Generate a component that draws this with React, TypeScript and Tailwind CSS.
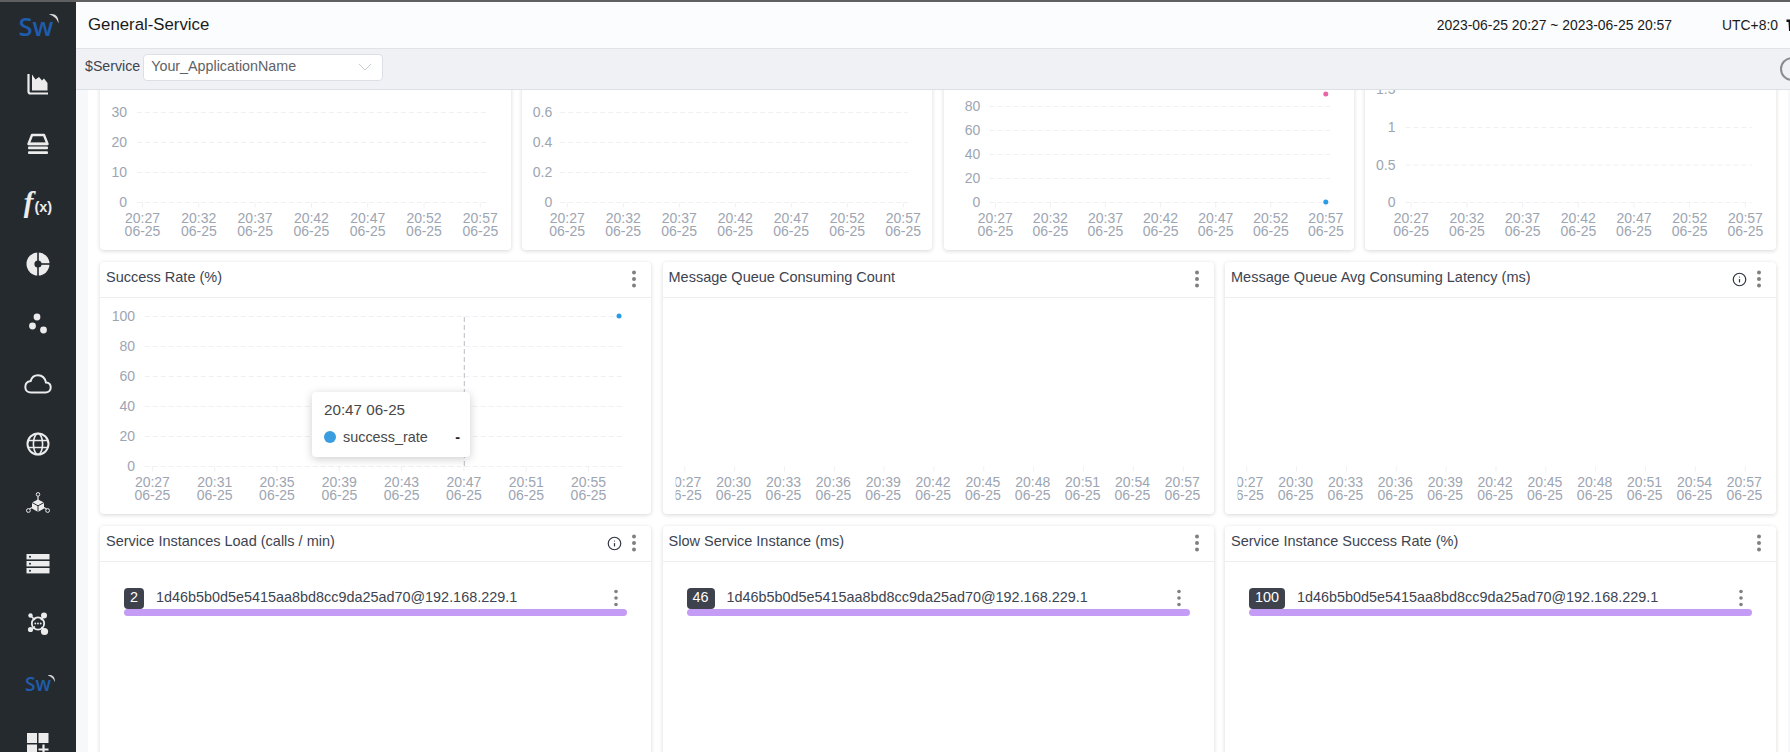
import React from "react";
import { Info } from "lucide-react";

const AXIS = "#9da5b2";
const GRID = "#eef0f3";

type YT = { l: string; y: number };
type ChartProps = {
  ox: number; oy: number; w: number; h: number;
  x0?: number; x1?: number; yLabelX?: number; axisY: number;
  yTicks?: YT[]; xs: { x: number; l: string; tx?: number }[];
  clipX?: number; children?: React.ReactNode; id: string;
};

function Chart({ ox, oy, w, h, x0, x1, yLabelX, axisY, yTicks = [], xs, clipX, children, id }: ChartProps) {
  return (
    <svg width={w} height={h} viewBox={`${ox} ${oy} ${w} ${h}`} className="block">
      {clipX !== undefined && (
        <clipPath id={id}>
          <rect x={clipX} y={oy} width={w} height={h} />
        </clipPath>
      )}
      {yTicks.map((t) => (
        <g key={t.l}>
          <line x1={x0} x2={x1} y1={t.y} y2={t.y} stroke={GRID} strokeDasharray="5 3" />
          <text x={yLabelX} y={t.y + 4.5} textAnchor="end" fill={AXIS} className="text-[14px]">{t.l}</text>
        </g>
      ))}
      {xs.map((t) => (
        <g key={t.x} clipPath={clipX !== undefined ? `url(#${id})` : undefined}>
          <line x1={t.tx ?? t.x} x2={t.tx ?? t.x} y1={axisY} y2={axisY + 5} stroke={GRID} />
          <text x={t.x} y={axisY + 20.5} textAnchor="middle" fill={AXIS} className="text-[14px]">{t.l}</text>
          <text x={t.x} y={axisY + 33.5} textAnchor="middle" fill={AXIS} className="text-[14px]">06-25</text>
        </g>
      ))}
      {children}
    </svg>
  );
}

function Kebab({ small }: { small?: boolean }) {
  return (
    <svg width="6" height="18" viewBox="0 0 6 18" className="block shrink-0">
      <circle cx="3" cy="2.5" r={small ? 1.8 : 2} fill="#808080" />
      <circle cx="3" cy="9" r={small ? 1.8 : 2} fill="#808080" />
      <circle cx="3" cy="15.5" r={small ? 1.8 : 2} fill="#808080" />
    </svg>
  );
}

function Card({ title, info, children, className = "" }: { title: string; info?: boolean; children?: React.ReactNode; className?: string }) {
  return (
    <div className={`bg-white rounded-[4px] shadow-[0_1px_4px_rgba(0,0,0,0.16)] flex flex-col min-w-0 ${className}`}>
      <div className="h-[36px] shrink-0 border-b border-[#eeeeee] flex items-center pl-[6px] pr-[14px] text-[14.5px] text-[#3d4451]">
        <span className="truncate pb-[3px]">{title}</span>
        <span className="ml-auto flex items-center gap-[9px] pb-[1px]">
          {info && <Info size={15} strokeWidth={1.9} color="#2d3340" />}
          <Kebab />
        </span>
      </div>
      {children}
    </div>
  );
}

const topTimes = ["20:27", "20:32", "20:37", "20:42", "20:47", "20:52", "20:57"];
const xsFrom = (start: number, step: number, times: string[]) => times.map((l, i) => ({ x: start + step * i, l }));

function TopCard({ ox, x0, x1, yLabelX, yTicks, start, step, id, children }: { ox: number; x0: number; x1: number; yLabelX: number; yTicks: YT[]; start: number; step: number; id: string; children?: React.ReactNode }) {
  return (
    <Card title="">
      <Chart id={id} ox={ox} oy={33} w={410.5} h={216} x0={x0} x1={x1} yLabelX={yLabelX} axisY={201.5} yTicks={yTicks} xs={xsFrom(start, step, topTimes)}>
        {children}
      </Chart>
    </Card>
  );
}

const midTimes = ["20:27", "20:30", "20:33", "20:36", "20:39", "20:42", "20:45", "20:48", "20:51", "20:54", "20:57"];

function EmptyChartCard({ title, ox, id, info }: { title: string; ox: number; id: string; info?: boolean }) {
  const xs = midTimes.map((l, i) => ({ x: ox + 20.8 + 49.85 * i, tx: ox + 21.7 + 49.85 * i, l }));
  return (
    <Card title={title} info={info}>
      <Chart id={id} ox={ox} oy={297} w={551} h={216} axisY={465.5} xs={xs} clipX={ox + 12.6} />
    </Card>
  );
}

function InstanceCard({ title, value, info }: { title: string; value: string; info?: boolean }) {
  return (
    <Card title={title} info={info} className="h-[320px]">
      <div className="px-[24px] pt-[25px]">
        <div className="flex items-center h-[22px] text-[14.4px] text-[#3d4451]">
          <span className="bg-[#3d424d] text-white rounded-[4px] h-[21px] px-[6px] flex items-center justify-center">{value}</span>
          <span className="ml-[12px] pb-[1px]">1d46b5b0d5e5415aa8bd8cc9da25ad70@192.168.229.1</span>
          <span className="ml-auto pr-[8px]"><Kebab small /></span>
        </div>
        <div className="h-[7px] rounded-full bg-[#c49bf5]" />
      </div>
    </Card>
  );
}

function SwLogo({ small }: { small?: boolean }) {
  return (
    <span className={`relative inline-block font-['Open_Sans',sans-serif] font-semibold text-[#1f5cab] leading-none ${small ? "text-[19px]" : "text-[25.5px]"}`}>
      Sw
      <svg width={small ? 9 : 12} height={small ? 11 : 14} viewBox="0 0 12 14" className={`absolute top-[-1px] ${small ? "right-[-5px]" : "right-[-7px]"}`}>
        <path d="M1 1.5C6 0 11 2.5 10.5 10.5C9 5.5 6 3 1 1.5Z" fill="#d9d9d9" />
      </svg>
    </span>
  );
}

const W = "#ececec";
const DARK = "#252a2f";

const sideIcons: React.ReactNode[] = [
  <svg width="22" height="22" viewBox="0 0 22 22" key="a">
    <path d="M1.5 1V18.5Q1.5 20.5 3.5 20.5H21" fill="none" stroke={W} strokeWidth="2.2" />
    <path d="M5 1.5L8.5 6.5L12 4L15 7.5L17 5.5L20.5 10V17.5H5Z" fill={W} />
  </svg>,
  <svg width="22" height="22" viewBox="0 0 22 22" key="b">
    <path d="M5 2H17L20.5 11H1.5Z" fill="none" stroke={W} strokeWidth="2.4" strokeLinejoin="round" />
    <rect x="1" y="9.5" width="20" height="2.6" fill={W} />
    <rect x="1" y="13.5" width="20" height="2.8" rx="1" fill={W} />
    <rect x="1" y="18.2" width="20" height="2.8" rx="1" fill={W} />
  </svg>,
  <span key="c" className="flex items-baseline pb-[4px] font-['Liberation_Serif',serif] text-[#ececec] font-bold leading-none">
    <span className="italic text-[29px]">f</span>
    <span className="font-['Liberation_Sans',sans-serif] text-[14.5px] ml-[1px]">(x)</span>
  </span>,
  <svg width="24" height="24" viewBox="0 0 24 24" key="d">
    <circle cx="12" cy="12" r="11.5" fill={W} />
    <rect x="11.2" y="0" width="1.6" height="24" fill={DARK} />
    <rect x="12" y="11.2" width="12" height="1.6" fill={DARK} />
    <circle cx="12" cy="12" r="3.6" fill={DARK} />
  </svg>,
  <svg width="22" height="22" viewBox="0 0 22 22" key="e">
    <circle cx="10" cy="4" r="3.4" fill={W} />
    <circle cx="5.5" cy="13" r="3.4" fill={W} />
    <circle cx="16.5" cy="17" r="3.4" fill={W} />
  </svg>,
  <svg width="28" height="20" viewBox="0 0 28 20" key="f">
    <path d="M7 18.5H21.5C24.5 18.5 26.7 16.3 26.7 13.5C26.7 10.7 24.7 8.8 22 8.6C21 4 17.7 1.3 14 1.3C10.5 1.3 7.7 3.5 6.7 7C3.5 7.5 1.3 10 1.3 13C1.3 16.2 3.7 18.5 7 18.5Z" fill="none" stroke={W} strokeWidth="2" />
  </svg>,
  <svg width="24" height="24" viewBox="0 0 24 24" key="g" fill="none" stroke={W} strokeWidth="2">
    <circle cx="12" cy="12" r="10.5" />
    <ellipse cx="12" cy="12" rx="4.6" ry="10.5" strokeWidth="1.6" />
    <path d="M2 8.5H22M2 15.5H22" strokeWidth="1.6" />
  </svg>,
  <svg width="24" height="24" viewBox="0 0 24 24" key="h">
    <circle cx="12" cy="2.4" r="1.8" fill="none" stroke={W} strokeWidth="1" />
    <path d="M12 4.2V8M6 15.5L3.5 17M18 15.5L20.5 17" stroke={W} strokeWidth="1.2" />
    <path d="M12 7.5L18 10.5V16.5L12 20L6 16.5V10.5Z" fill={W} />
    <path d="M6 10.5L12 13.8L18 10.5M12 13.8V20" stroke={DARK} strokeWidth="1" fill="none" />
    <circle cx="2.4" cy="18.5" r="1.9" fill="none" stroke={W} strokeWidth="1" />
    <circle cx="21.6" cy="18.5" r="1.9" fill="none" stroke={W} strokeWidth="1" />
  </svg>,
  <svg width="24" height="20" viewBox="0 0 24 20" key="i">
    <rect x="0.5" y="0" width="23" height="5.4" fill={W} />
    <rect x="0.5" y="7" width="23" height="5.4" fill={W} />
    <rect x="0.5" y="14" width="23" height="5.4" fill={W} />
    <circle cx="4" cy="2.7" r="1" fill={DARK} />
    <circle cx="4" cy="9.7" r="1" fill={DARK} />
    <circle cx="4" cy="16.7" r="1" fill={DARK} />
  </svg>,
  <svg width="22" height="24" viewBox="0 0 22 24" key="j">
    <path d="M4 4L8 8M16.5 4L14 8M4 18L8 14.5M18 19L14.5 15" stroke={W} strokeWidth="1.6" />
    <circle cx="11" cy="11.5" r="6.2" fill="none" stroke={W} strokeWidth="1.8" />
    <circle cx="8.3" cy="11.5" r="0.9" fill={W} />
    <circle cx="11" cy="11.5" r="0.9" fill={W} />
    <circle cx="13.7" cy="11.5" r="0.9" fill={W} />
    <circle cx="3.5" cy="3.5" r="2.2" fill={W} />
    <circle cx="17" cy="3.5" r="3" fill={W} />
    <circle cx="3.5" cy="17.5" r="2.6" fill={W} />
    <circle cx="17.5" cy="19.5" r="3.6" fill={W} />
  </svg>,
  <SwLogo small key="k" />,
  <svg width="22" height="22" viewBox="0 0 22 22" key="l">
    <rect x="0" y="0" width="10" height="10" fill={W} />
    <rect x="11.5" y="0" width="10" height="10" fill={W} />
    <rect x="0" y="11.5" width="10" height="10" fill={W} />
    <path d="M16.5 11.5V21.5M11.5 16.5H21.5" stroke={W} strokeWidth="2.2" />
  </svg>,
];

export default function App() {
  return (
    <div className="h-[752px] w-[1790px] overflow-hidden flex flex-col font-['Liberation_Sans',Arial,sans-serif] bg-white">
      <div className="h-[2px] bg-[#5f6062] shrink-0" />
      <div className="flex flex-1 min-h-0">
        <aside className="w-[76px] shrink-0 bg-[#252a2f] flex flex-col items-center overflow-hidden">
          <div className="h-[52px] shrink-0 flex items-center justify-center pb-[2px] pr-[4px]">
            <SwLogo />
          </div>
          {sideIcons.map((ic, i) => (
            <div key={i} className="h-[60px] shrink-0 flex items-center justify-center">{ic}</div>
          ))}
        </aside>
        <div className="flex-1 min-w-0 flex flex-col">
          <header className="h-[47px] shrink-0 bg-[#fbfcfd] border-b border-[#dfe3e8] flex items-center pl-[12px] overflow-hidden">
            <span className="text-[16.8px] text-[#1a1a1a]">General-Service</span>
            <span className="ml-auto text-[13.9px] text-[#1a1a1a] whitespace-nowrap">2023-06-25 20:27 ~ 2023-06-25 20:57</span>
            <span className="ml-[50px] text-[13.9px] text-[#1a1a1a] whitespace-nowrap">UTC+8:0</span>
            <svg width="12" height="14" viewBox="0 0 12 14" className="ml-[8px] mr-[-8px] shrink-0">
              <path d="M0.5 1.5H11.5V4H9.5L9 13H3L2.5 4H0.5Z" fill="#111" />
            </svg>
          </header>
          <div className="h-[41px] shrink-0 bg-[#eff1f5] border-b border-[#dcdfe3] flex items-center pl-[9px] pb-[4px] overflow-hidden">
            <span className="text-[14.2px] text-[#3d4451]">$Service</span>
            <div className="ml-[3px] w-[240px] h-[27px] bg-white border border-[#dcdfe6] rounded-[4px] flex items-center pl-[7px] pr-[10px]">
              <span className="text-[14.3px] text-[#606266]">Your_ApplicationName</span>
              <svg width="14" height="8" viewBox="0 0 14 8" className="ml-auto">
                <path d="M1 1L7 7L13 1" fill="none" stroke="#c6cad1" />
              </svg>
            </div>
            <div className="ml-auto mr-[-14px] mt-[4px] w-[24px] h-[24px] rounded-full border-2 border-[#8c8c8c] shrink-0 bg-[#eff1f5]" />
          </div>
          <div className="flex-1 min-h-0 overflow-hidden bg-[#f7f8fa] pl-[12px]">
            <main className="bg-white h-full pl-[12px] pr-[12px] mr-[2px] flex flex-col gap-[12px] overflow-hidden">
              <div className="grid grid-cols-4 gap-[11.33px] mt-[-92px] shrink-0">
                <TopCard id="c1" ox={100} x0={137} x1={486} yLabelX={127} start={142.5} step={56.3}
                  yTicks={[{ l: "30", y: 111.5 }, { l: "20", y: 141.5 }, { l: "10", y: 171.5 }, { l: "0", y: 201.5 }]} />
                <TopCard id="c2" ox={521.8} x0={560} x1={908} yLabelX={552} start={567} step={56}
                  yTicks={[{ l: "0.6", y: 111.5 }, { l: "0.4", y: 141.5 }, { l: "0.2", y: 171.5 }, { l: "0", y: 201.5 }]} />
                <TopCard id="c3" ox={943.7} x0={989} x1={1331} yLabelX={980} start={995} step={55.1}
                  yTicks={[{ l: "80", y: 105.5 }, { l: "60", y: 129.5 }, { l: "40", y: 153.5 }, { l: "20", y: 177.5 }, { l: "0", y: 201.5 }]}>
                  <circle cx="1325.5" cy="93" r="2.5" fill="#e668a8" />
                  <circle cx="1325.5" cy="201" r="2.5" fill="#2b9be6" />
                </TopCard>
                <TopCard id="c4" ox={1365.5} x0={1406} x1={1752} yLabelX={1396} start={1411.7} step={55.7}
                  yTicks={[{ l: "1.5", y: 88 }, { l: "1", y: 126.5 }, { l: "0.5", y: 164 }, { l: "0", y: 201.5 }]} />
              </div>
              <div className="grid grid-cols-3 gap-[11.5px] shrink-0">
                <Card title="Success Rate (%)">
                  <div className="relative">
                    <Chart id="m1" ox={100} oy={297} w={551} h={216} x0={144.7} x1={625} yLabelX={135} axisY={465.5}
                      yTicks={[{ l: "100", y: 315.5 }, { l: "80", y: 345.5 }, { l: "60", y: 375.5 }, { l: "40", y: 405.5 }, { l: "20", y: 435.5 }, { l: "0", y: 465.5 }]}
                      xs={xsFrom(152.4, 62.3, ["20:27", "20:31", "20:35", "20:39", "20:43", "20:47", "20:51", "20:55"])}>
                      <line x1="464.3" x2="464.3" y1="316" y2="465.5" stroke="#b9bec6" strokeDasharray="5 3" />
                      <circle cx="619" cy="315" r="2.5" fill="#2b9be6" />
                    </Chart>
                    <div className="absolute left-[212px] top-[94px] w-[158px] h-[65px] bg-white rounded-[4px] shadow-[0_2px_10px_rgba(0,0,0,0.2)] px-[12px] pt-[9px] text-[#484848]">
                      <div className="leading-[18px] text-[15.2px]">20:47 06-25</div>
                      <div className="flex items-center mt-[9px] leading-[18px] text-[14.4px]">
                        <span className="w-[12px] h-[12px] rounded-full bg-[#3a9de0] shrink-0" />
                        <span className="ml-[7px]">success_rate</span>
                        <span className="ml-auto font-bold mr-[-2px] text-[#222]">-</span>
                      </div>
                    </div>
                  </div>
                </Card>
                <EmptyChartCard id="m2" ox={662.5} title="Message Queue Consuming Count" />
                <EmptyChartCard id="m3" ox={1225} title="Message Queue Avg Consuming Latency (ms)" info />
              </div>
              <div className="grid grid-cols-3 gap-[11.5px] shrink-0">
                <InstanceCard title="Service Instances Load (calls / min)" value="2" info />
                <InstanceCard title="Slow Service Instance (ms)" value="46" />
                <InstanceCard title="Service Instance Success Rate (%)" value="100" />
              </div>
            </main>
          </div>
        </div>
      </div>
    </div>
  );
}
